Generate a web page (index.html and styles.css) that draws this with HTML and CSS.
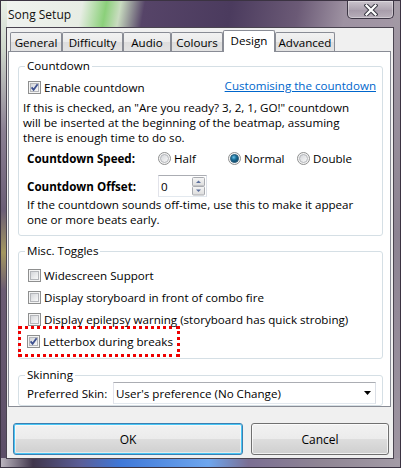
FILE: index.html
```html
<!DOCTYPE html>
<html lang="en">
<head>
  <meta charset="UTF-8" />
  <title>Song Setup</title>
  <link rel="stylesheet" href="styles.css">
</head>
<body>
  <svg class="defs" width="0" height="0" aria-hidden="true">
    <defs>
      <linearGradient id="boxfill" x1="0" y1="0" x2="1" y2="1">
        <stop offset="0" stop-color="#d2d4d8"/>
        <stop offset="1" stop-color="#fbfbfb"/>
      </linearGradient>
      <radialGradient id="dotfill" cx="0.4" cy="0.35" r="0.7">
        <stop offset="0" stop-color="#6fc3e8"/>
        <stop offset="0.45" stop-color="#1a6f9a"/>
        <stop offset="1" stop-color="#0b3f5f"/>
      </radialGradient>
      <linearGradient id="spinfill" x1="0" y1="0" x2="0" y2="1">
        <stop offset="0" stop-color="#f6f6f6"/>
        <stop offset="1" stop-color="#dcdcdc"/>
      </linearGradient>
    </defs>
  </svg>

  <div class="window">
    <div class="titlebar">
      <span class="title">Song Setup</span>
      <div class="close">
        <svg width="14" height="12" viewBox="0 0 14 12">
          <path d="M2.5 1.5 L11.5 10.5 M11.5 1.5 L2.5 10.5" stroke="#3b3b45" stroke-width="4.2" stroke-linecap="square"/>
          <path d="M2.5 1.5 L11.5 10.5 M11.5 1.5 L2.5 10.5" stroke="#fff" stroke-width="2.2" stroke-linecap="square"/>
        </svg>
      </div>
    </div>

    <div class="client">
      <div class="tabs">
        <div class="tab tab-general">General</div>
        <div class="tab tab-difficulty">Difficulty</div>
        <div class="tab tab-audio">Audio</div>
        <div class="tab tab-colours">Colours</div>
        <div class="tab tab-design active">Design</div>
        <div class="tab tab-advanced">Advanced</div>
      </div>

      <div class="panel">
        <!-- Countdown -->
        <fieldset class="group group-countdown">
          <legend>Countdown</legend>
          <div class="row-check">
            <label class="check">
              <svg class="cb" viewBox="0 0 13 13"><rect x=".5" y=".5" width="12" height="12" fill="#f4f4f4" stroke="#8e8f8f"/><rect x="2.5" y="2.5" width="8" height="8" fill="url(#boxfill)" stroke="#b4b6ba"/><path d="M3.6 6.4 L5.6 8.8 L9.6 3.2" fill="none" stroke="#3e5190" stroke-width="1.8"/></svg>
              Enable countdown
            </label>
            <a class="link" href="#">Customising the countdown</a>
          </div>
          <p class="note note-first">If this is checked, an "Are you ready? 3, 2, 1, GO!" countdown<br>will be inserted at the beginning of the beatmap, assuming<br>there is enough time to do so.</p>

          <div class="field field-speed">
            <span class="field-label">Countdown Speed:</span>
            <label class="radio">
              <svg class="rb" viewBox="0 0 13 13"><circle cx="6.5" cy="6.5" r="6" fill="#f4f4f4" stroke="#8e8f8f"/><circle cx="6.5" cy="6.5" r="4" fill="url(#boxfill)" stroke="#b4b6ba"/></svg>
              Half
            </label>
            <label class="radio">
              <svg class="rb" viewBox="0 0 13 13"><circle cx="6.5" cy="6.5" r="6" fill="#f4f4f4" stroke="#8e8f8f"/><circle cx="6.5" cy="6.5" r="4" fill="url(#dotfill)" stroke="#2c5f7c"/></svg>
              Normal
            </label>
            <label class="radio">
              <svg class="rb" viewBox="0 0 13 13"><circle cx="6.5" cy="6.5" r="6" fill="#f4f4f4" stroke="#8e8f8f"/><circle cx="6.5" cy="6.5" r="4" fill="url(#boxfill)" stroke="#b4b6ba"/></svg>
              Double
            </label>
          </div>

          <div class="field field-offset">
            <span class="field-label">Countdown Offset:</span>
            <div class="spin">
              <span class="spin-value">0</span>
              <svg class="spin-btns" width="13" height="19" viewBox="0 0 13 19">
                <rect x=".5" y=".5" width="12" height="8.5" rx="1" fill="url(#spinfill)" stroke="#a9abb0"/>
                <rect x=".5" y="9.5" width="12" height="8.5" rx="1" fill="url(#spinfill)" stroke="#a9abb0"/>
                <path d="M4 6 L6.5 3.5 L9 6 Z" fill="#5a6e9c"/>
                <path d="M4 12.5 L6.5 15 L9 12.5 Z" fill="#5a6e9c"/>
              </svg>
            </div>
          </div>
          <p class="note">If the countdown sounds off-time, use this to make it appear<br>one or more beats early.</p>
        </fieldset>

        <!-- Misc. Toggles -->
        <fieldset class="group group-misc">
          <legend>Misc. Toggles</legend>
          <label class="check row-toggle">
            <svg class="cb" viewBox="0 0 13 13"><rect x=".5" y=".5" width="12" height="12" fill="#f4f4f4" stroke="#8e8f8f"/><rect x="2.5" y="2.5" width="8" height="8" fill="url(#boxfill)" stroke="#b4b6ba"/></svg>
            Widescreen Support
          </label>
          <label class="check row-toggle">
            <svg class="cb" viewBox="0 0 13 13"><rect x=".5" y=".5" width="12" height="12" fill="#f4f4f4" stroke="#8e8f8f"/><rect x="2.5" y="2.5" width="8" height="8" fill="url(#boxfill)" stroke="#b4b6ba"/></svg>
            Display storyboard in front of combo fire
          </label>
          <label class="check row-toggle">
            <svg class="cb" viewBox="0 0 13 13"><rect x=".5" y=".5" width="12" height="12" fill="#f4f4f4" stroke="#8e8f8f"/><rect x="2.5" y="2.5" width="8" height="8" fill="url(#boxfill)" stroke="#b4b6ba"/></svg>
            Display epilepsy warning (storyboard has quick strobing)
          </label>
          <label class="check row-toggle highlight">
            <svg class="cb" viewBox="0 0 13 13"><rect x=".5" y=".5" width="12" height="12" fill="#f4f4f4" stroke="#8e8f8f"/><rect x="2.5" y="2.5" width="8" height="8" fill="url(#boxfill)" stroke="#b4b6ba"/><path d="M3.6 6.4 L5.6 8.8 L9.6 3.2" fill="none" stroke="#3e5190" stroke-width="1.8"/></svg>
            Letterbox during breaks
          </label>
        </fieldset>

        <!-- Skinning -->
        <fieldset class="group group-skin">
          <legend>Skinning</legend>
          <div class="field field-skin">
            <span class="field-label">Preferred Skin:</span>
            <div class="combo">
              <span>User's preference (No Change)</span>
              <svg width="7" height="4" viewBox="0 0 7 4"><path d="M0 0 H7 L3.5 4 Z" fill="#000"/></svg>
            </div>
          </div>
        </fieldset>
      </div>

      <div class="buttons">
        <button class="btn btn-ok">OK</button>
        <button class="btn btn-cancel">Cancel</button>
      </div>
    </div>
  </div>
</body>
</html>
```

FILE: styles.css
```css
:root {
  --tab-border: #898c95;
  --group-border: #d5dfe5;
  --text: #000;
  --link: #0066cc;
}
* { box-sizing:border-box; margin:0; padding:0 }
html, body { width:401px; height:468px; overflow:hidden }
body {
  font-family:"Open Sans","Noto Sans",sans-serif; font-size:11.6px; color:var(--text);
  white-space:nowrap;
}
.defs { position:absolute; width:0; height:0 }

/* window frame (aero glass, blurred backdrop) */
.window {
  width:401px; height:468px;
  border:1px solid #3b3342;
  display:flex; flex-direction:column;
  background:
    linear-gradient(to right, #bbb5bf 0, #40364c 8%, #5b5e98 20%, #3f78d8 30%, #6ea6ee 52%, #7b6f93 62%, #8f8594 80%, #a39ba6 100%) bottom / 100% 9px no-repeat,
    linear-gradient(to bottom, #e9efe7 0, #cfd8cc 10%, #8a7f92 28%, #6b5e76 45%, #a39760 54%, #6b5c73 62%, #5b4d66 100%) left / 6px 100% no-repeat,
    linear-gradient(to bottom, #a49ba6 0, #8c8392 50%, #9f96a2 100%) right / 7px 100% no-repeat,
    linear-gradient(100deg, #f1f3f1 0, #e7ede4 17%, #8bd07a 22%, #c9dcc0 25%, #564468 30%, #4b3b5e 48%, #6b5a76 62%, #9e92a2 72%, #aaa0aa 100%);
}
.titlebar {
  height:26px; flex:none;
  display:flex; justify-content:space-between; align-items:flex-start;
}
.title { padding:6px 0 0 7px; line-height:16px; font-size:12px; color:#111 }
.close {
  width:47px; height:18px; margin-right:6px;
  border:1px solid #3c3644; border-top:none; border-radius:0 0 5px 5px;
  background:linear-gradient(rgba(255,255,255,0.45), rgba(255,255,255,0.15) 50%, rgba(255,255,255,0.05) 51%, rgba(255,255,255,0.25));
  box-shadow:inset 0 0 0 1px rgba(255,255,255,0.35);
  display:flex; align-items:center; justify-content:center;
}

.client {
  margin-left:5px; width:388px; height:432px; flex:none;
  border:1px solid #4a4450;
  background:#f0f0f0;
}

/* tabs */
.tabs { height:23px; display:flex; align-items:flex-end; padding-left:3px }
.tab {
  height:19px; display:flex; align-items:center; justify-content:center;
  border:1px solid var(--tab-border); border-bottom:none; border-radius:2px 2px 0 0;
  background:linear-gradient(#f2f2f2, #ebebeb 50%, #dddddd 51%, #e3e3e3);
  line-height:14px; padding-top:1px;
}
.tab.active {
  height:22px; margin-bottom:-1px; position:relative; z-index:1;
  background:#fff; padding:0 0 2px;
}
.tab-general { width:52px }
.tab-difficulty { width:61px }
.tab-audio { width:48px }
.tab-colours { width:52px }
.tab-design { width:52px }
.tab-advanced { width:60px }

.panel {
  margin-left:1px; width:383px; height:356px;
  border:1px solid var(--tab-border);
  background:#fff;
}

/* group boxes */
.group {
  border:1px solid var(--group-border); border-radius:3px;
  margin:0 7px 0 9px; padding:0; min-width:0;
}
.group legend { margin-left:6px; padding:0 2px; line-height:14px }
.group-countdown { margin-top:7px; padding-bottom:8px }
.group-misc { margin-top:8px; padding-bottom:1px }
.group-skin { margin-top:9px; padding-bottom:1px }

.check, .radio { display:flex; align-items:center; gap:3px }
.cb, .rb { width:13px; height:13px; flex:none }

.row-check {
  margin-top:6px; height:16px; padding:0 6px 0 9px;
  display:flex; align-items:center; justify-content:space-between;
}
.link { color:var(--link); text-decoration:underline; margin-top:-3px }

.note { line-height:15px; padding-left:8px }
.note-first { margin-top:5px; padding-left:4px }

.field { display:flex; align-items:center; padding-left:8px }
.field-speed { margin-top:5px; height:16px; display:grid; grid-template-columns:131px 70px 69px auto }
.field-offset { margin-top:9px; height:22px }
.field-offset .field-label { width:131px }
.field-label { font-weight:bold }
.field-skin .field-label { font-weight:normal; width:86px }

.spin {
  width:49px; height:22px;
  border:1px solid #abadb3; border-color:#abadb3 #dbdfe6 #e3e9ef #e2e3ea;
  display:flex; align-items:center; justify-content:space-between;
  padding:0 1px 0 2px;
}

.row-toggle { height:22px; padding-left:9px }
.row-toggle:first-of-type { margin-top:6px }
.highlight {
  margin:-4px 0 0 -1px; width:162px; height:31px;
  border:3px dotted #ee0000; padding-left:6px;
}

.combo {
  width:263px; height:22px;
  border:1px solid #abadb3; border-color:#abadb3 #dbdfe6 #e3e9ef #e2e3ea;
  background:#fff;
  display:flex; align-items:center; justify-content:space-between;
  padding:0 4px 0 2px;
}

/* dialog buttons */
.buttons { display:flex; gap:8px; margin:16px 0 0 6px }
.btn {
  height:32px; font:inherit; font-size:12px; color:#000;
  border:1px solid #707070; border-radius:3px;
  background:linear-gradient(#f2f2f2, #ebebeb 50%, #dddddd 51%, #cfcfcf);
  box-shadow:inset 0 0 0 1px rgba(255,255,255,0.7);
}
.btn-ok {
  width:230px; border-color:#3c7fb1;
  box-shadow:inset 0 0 0 1px #48c6f5, inset 0 0 0 2px rgba(255,255,255,0.5);
}
.btn-cancel { width:138px }
```
